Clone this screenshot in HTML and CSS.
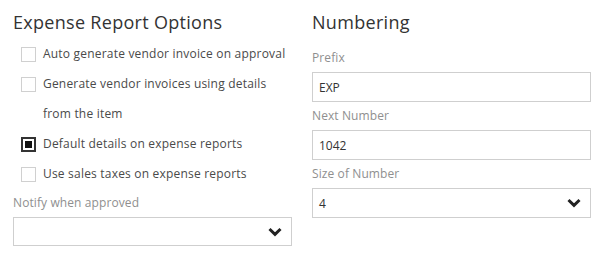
FILE: index.html
```html
<!DOCTYPE html>
<html>
<head>
<meta charset="utf-8">
<link rel="stylesheet" href="styles.css">
</head>
<body>
<div class="page">
  <section class="col">
    <h2 class="heading">Expense Report Options</h2>
    <ul class="checks">
      <li class="check"><span class="box"></span><span class="check-text">Auto generate vendor invoice on approval</span></li>
      <li class="check"><span class="box"></span><span class="check-text check-wrap">Generate vendor invoices using details from the item</span></li>
      <li class="check"><span class="box checked"></span><span class="check-text">Default details on expense reports</span></li>
      <li class="check"><span class="box"></span><span class="check-text">Use sales taxes on expense reports</span></li>
    </ul>
    <div class="field field-left">
      <div class="label">Notify when approved</div>
      <div class="input select"><span class="value"></span>
        <svg class="chev" width="14" height="10" viewBox="0 0 14 10"><path d="M1.5 2 L7 7.3 L12.5 2" fill="none" stroke="#222" stroke-width="3"/></svg>
      </div>
    </div>
  </section>
  <section class="col">
    <h2 class="heading">Numbering</h2>
    <div class="fields">
      <div class="field">
        <div class="label">Prefix</div>
        <div class="input"><span class="value">EXP</span></div>
      </div>
      <div class="field">
        <div class="label">Next Number</div>
        <div class="input"><span class="value">1042</span></div>
      </div>
      <div class="field">
        <div class="label">Size of Number</div>
        <div class="input select"><span class="value">4</span>
          <svg class="chev" width="14" height="10" viewBox="0 0 14 10"><path d="M1.5 2 L7 7.3 L12.5 2" fill="none" stroke="#222" stroke-width="3"/></svg>
        </div>
      </div>
    </div>
  </section>
</div>
</body>
</html>
```
FILE: styles.css
```css
* { box-sizing: border-box; }
html, body { margin: 0; padding: 0; background: #fff; }
body { font-family: "Open Sans", "Noto Sans", sans-serif; color: #333; }
.page { display: flex; gap: 20px; padding-left: 13px; }
.col { width: 279px; }
.heading { margin: 0 0 6px; padding-top: 10px; font-size: 18px; line-height: 24px; font-weight: 400; color: #333; letter-spacing: 0.3px; }
.checks { list-style: none; margin: -1px 0 0; padding: 0 0 0 8px; }
.check { display: flex; align-items: flex-start; font-size: 12px; line-height: 30px; color: #4a4a4a; letter-spacing: 0.2px; }
.box { flex: none; width: 15px; height: 15px; border: 1px solid #d0d0d0; margin-top: 8px; margin-right: 7px; position: relative; }
.box.checked { border: 2px solid #333; }
.box.checked::after { content: ""; position: absolute; left: 2px; top: 2px; width: 7px; height: 7px; background: #111; }
.check-text { white-space: nowrap; }
.check-wrap { white-space: normal; width: 240px; }
.field { display: flex; flex-direction: column; }
.label { font-size: 12px; line-height: 28px; color: #8f8f8f; letter-spacing: 0.1px; }
.fields { padding-top: 4px; }
.input { height: 30px; border: 1px solid #cfcfcf; display: flex; align-items: center; padding: 0 9px 0 6px; font-size: 12px; color: #333; }
.input .value { flex: 1; }
.field-left .input { height: 29px; }
.chev { flex: none; }
```
